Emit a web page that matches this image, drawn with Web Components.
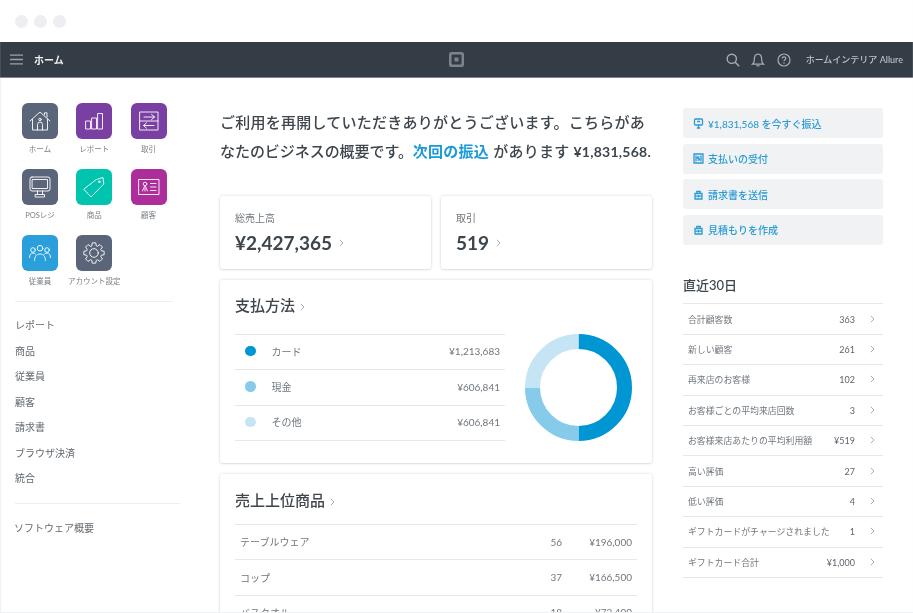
<!DOCTYPE html>
<html lang="ja">
<head>
<meta charset="utf-8">
<title>ホーム</title>
<style>
  html, body { margin: 0; height: 100%; overflow: hidden; background: #fff; }
  body { font-family: Lato, "Noto Sans CJK JP", sans-serif; color: #3d454d; }
</style>
</head>
<body>
<template id="top-nav">
  <style>
    :host { display: flex; align-items: center; height: 35px; background: #343c45; border-bottom: 1px solid #7d858e; color: #e6e8ea; position: relative; }
    .burger { margin-left: 10px; width: 13px; height: 11px; display: block; }
    .title { margin-left: 11px; font-size: 10px; font-weight: 700; color: #eceef0; }
    .logo { position: absolute; left: 449px; top: 10px; width: 15px; height: 15px; }
    .right { margin-left: auto; display: flex; align-items: center; }
    .right svg { display: block; }
    .shop { font-size: 9px; font-weight: 500; color: #bfc4c9; margin: 0 10px 0 15px; white-space: nowrap; }
    .i1 { margin-right: 11px; } .i2 { margin-right: 12px; }
  </style>
  <svg class="burger" viewBox="0 0 13 11" fill="none" stroke="#9aa1a9" stroke-width="1.3"><path d="M0 1.2h13M0 5.5h13M0 9.8h13"/></svg>
  <span class="title">ホーム</span>
  <svg class="logo" viewBox="0 0 15 15"><path fill="#7b848d" fill-rule="evenodd" d="M2.5 0h10A2.5 2.5 0 0 1 15 2.500v10a2.500 2.500 0 0 1-2.500 2.500h-10A2.500 2.500 0 0 1 0 12.500v-10A2.500 2.500 0 0 1 2.500 0zM3.500 2.500a1 1 0 0 0-1 1v8a1 1 0 0 0 1 1h8a1 1 0 0 0 1-1v-8a1 1 0 0 0-1-1z"/><rect x="5.500" y="5.500" width="4" height="4" rx=".5" fill="#7b848d"/></svg>
  <div class="right">
    <svg class="i1" width="14" height="14" viewBox="0 0 14 14" fill="none" stroke="#a6adb4" stroke-width="1.400"><circle cx="5.800" cy="5.800" r="4.600"/><path d="M9.200 9.200l4 4"/></svg>
    <svg class="i2" width="14" height="14" viewBox="0 0 14 14" fill="none" stroke="#a6adb4" stroke-width="1.200"><path d="M1.500 11.200c1.300-1 1.800-2 1.800-4.500C3.300 3.500 4.800 1.200 7 1.200s3.700 2.300 3.700 5.500c0 2.500.5 3.500 1.800 4.500z"/><path d="M5.500 12.800h3"/></svg>
    <svg width="14" height="14" viewBox="0 0 14 14" fill="none" stroke="#a6adb4" stroke-width="1.200"><circle cx="7" cy="7" r="6"/><path d="M5.200 5.600c0-1 .8-1.700 1.800-1.700s1.800.7 1.800 1.600c0 1.300-1.800 1.400-1.800 2.800"/><path d="M7 9.500v1.200"/></svg>
    <span class="shop">ホームインテリア Allure</span>
  </div>
</template>

<template id="app-tile">
  <style>
    :host { display: flex; flex-direction: column; align-items: center; width: 54px; height: 66px; }
    .box { width: 36px; height: 36px; border-radius: 6px; background: var(--tile, #5b6579); display: flex; align-items: center; justify-content: center; }
    .label { margin-top: 5px; font-size: 7.500px; line-height: 12px; color: #7b8187; white-space: nowrap; }
    ::slotted(svg) { display: block; width: 22px; height: 22px; fill: none; stroke: #fff; stroke-width: .9; stroke-linejoin: round; stroke-linecap: round; }
  </style>
  <div class="box"><slot name="icon"></slot></div>
  <div class="label"><slot></slot></div>
</template>

<template id="side-bar">
  <style>
    :host { display: block; width: 220px; flex: none; box-sizing: border-box; padding: 25px 0 0 13px; }
    .tiles { display: grid; grid-template-columns: repeat(3, 54.300px); grid-auto-rows: 66px; height: 198px; }
    hr { border: 0; border-top: 1px solid #edeef0; margin: 0; }
    .one { width: 158px; margin: 0 0 11px 2px; }
    .two { width: 165px; margin: 11px 0 12px 2px; }
    .links { margin-left: 2px; font-size: 10px; color: #62696f; }
    .links.extra { margin-left: 1px; }
    ::slotted(div) { height: 25.500px; line-height: 25.500px; }
  </style>
  <div class="tiles"><slot name="tiles"></slot></div>
  <hr class="one">
  <div class="links"><slot name="links"></slot></div>
  <hr class="two">
  <div class="links extra"><slot name="extra"></slot></div>
</template>

<template id="intro-text">
  <style>
    :host { display: block; font-size: 15px; line-height: 29px; font-weight: 500; color: #3d454d; height: 88px; letter-spacing: .25px; white-space: nowrap; }
    ::slotted(a) { color: #1a9ad6; font-weight: 700; }
    ::slotted(b) { font-weight: 700; font-size: 14px; }
    ::slotted(span) { letter-spacing: -.05px; }
  </style>
  <slot></slot>
</template>

<template id="summary-card">
  <style>
    :host { display: block; flex: 1; box-sizing: border-box; height: 73px; background: #fff; border-radius: 3px; box-shadow: 0 0 3px rgba(40,50,60,.2), 0 1px 2px rgba(40,50,60,.08); padding: 15px 15px 0; }
    .label { font-size: 10px; line-height: 14px; color: #70777e; }
    .value { margin-top: 4px; font-size: 19px; line-height: 27px; font-weight: 700; color: #3d454d; display: flex; align-items: center; white-space: nowrap; }
    svg { margin-left: 7px; }
  </style>
  <div class="label"><slot name="label"></slot></div>
  <div class="value"><slot></slot><svg width="5" height="8" viewBox="0 0 5 8" fill="none" stroke="#a9aeb3" stroke-width="1"><path d="M.8.8L4 4 .8 7.200"/></svg></div>
</template>

<template id="panel-card">
  <style>
    :host { display: block; box-sizing: border-box; background: #fff; border-radius: 3px; box-shadow: 0 0 3px rgba(40,50,60,.2), 0 1px 2px rgba(40,50,60,.08); padding: 15px 15px 0; margin-top: 11px; }
    h2 { margin: 0; font-size: 15px; line-height: 21px; font-weight: 500; color: #3d454d; display: flex; align-items: flex-start; height: var(--head, 39px); padding-top: var(--nudge, 0); box-sizing: border-box; }
    svg { margin: 8px 0 0 5px; }
  </style>
  <h2><slot name="title"></slot><svg width="5" height="8" viewBox="0 0 5 8" fill="none" stroke="#a9aeb3" stroke-width="1"><path d="M.8.800L4 4 .8 7.200"/></svg></h2>
  <slot></slot>
</template>

<template id="pay-row">
  <style>
    :host { display: flex; align-items: center; box-sizing: border-box; height: 35.400px; border-bottom: 1px solid #e6e8ea; font-size: 10px; color: #70777e; padding-bottom: 2px; }
    i { width: 10.500px; height: 10.500px; border-radius: 50%; background: var(--dot); margin: 0 16px 0 10px; flex: none; }
    .val { margin-left: auto; padding-right: 5px; }
  </style>
  <i></i><slot name="name"></slot><span class="val"><slot></slot></span>
</template>

<template id="item-row">
  <style>
    :host { display: flex; align-items: center; box-sizing: border-box; height: 35.400px; border-bottom: 1px solid #e6e8ea; font-size: 10px; color: #70777e; padding: 0 5px 1px; }
    .q { margin-left: auto; width: 20px; text-align: right; }
    .v { width: 70px; text-align: right; }
  </style>
  <slot name="name"></slot><span class="q"><slot name="qty"></slot></span><span class="v"><slot></slot></span>
</template>

<template id="action-button">
  <style>
    :host { display: flex; align-items: center; height: 30px; background: #f1f2f3; border-radius: 3px; margin-bottom: 5.600px; padding-left: 10px; font-size: 10px; font-weight: 500; color: #2a9bd4; white-space: nowrap; }
    ::slotted(svg) { width: 11px; height: 11px; margin-right: 4px; flex: none; fill: none; stroke: #2a9bd4; stroke-width: 1.300; }
  </style>
  <slot name="icon"></slot><slot></slot>
</template>

<template id="stat-row">
  <style>
    :host { display: flex; align-items: center; box-sizing: border-box; height: 30.400px; border-bottom: 1px solid #e6e8ea; font-size: 8.900px; color: #70777e; padding-left: 5px; white-space: nowrap; }
    .v { margin-left: auto; font-size: 9px; color: #5d646b; }
    svg { margin: 0 8px 1px 15px; flex: none; }
  </style>
  <slot name="name"></slot><span class="v"><slot></slot></span><svg width="5" height="8" viewBox="0 0 5 8" fill="none" stroke="#a9aeb3" stroke-width="1"><path d="M.8.800L4 4 .8 7.200"/></svg>
</template>

<template id="app-shell">
  <style>
    :host { display: block; height: 613px; overflow: hidden; position: relative; filter: blur(.35px); }
    :host::after { content: ""; position: absolute; inset: 0; box-shadow: inset 0 -1px 1px #f0f1f2; pointer-events: none; }
    .chrome { height: 42px; display: flex; align-items: center; gap: 6px; padding-left: 15px; box-sizing: border-box; }
    .chrome i { width: 13px; height: 13px; border-radius: 50%; background: #edeef2; }
    .body { display: flex; box-shadow: inset 1px 0 1px #f0f1f2; }
    .main { width: 432px; flex: none; padding-top: 30px; }
    .cards { display: flex; gap: 10px; }
    .side { width: 200px; flex: none; margin-left: 31px; padding-top: 30px; }
    h3 { margin: 0; padding-top: 24.500px; height: 54px; box-sizing: border-box; font-size: 13px; line-height: 20px; font-weight: 500; color: #3d454d; border-bottom: 1px solid #e6e8ea; }
  </style>
  <div class="chrome"><i></i><i></i><i></i></div>
  <slot name="nav"></slot>
  <div class="body">
    <slot name="sidebar"></slot>
    <div class="main">
      <slot name="intro"></slot>
      <div class="cards"><slot name="cards"></slot></div>
      <slot name="panels"></slot>
    </div>
    <div class="side">
      <slot name="actions"></slot>
      <h3>直近30日</h3>
      <slot name="stats"></slot>
    </div>
  </div>
</template>

<app-shell>
  <top-nav slot="nav"></top-nav>
  <side-bar slot="sidebar">
    <app-tile slot="tiles" style="--tile:#5b6579"><svg slot="icon" viewBox="0 0 22 22"><path d="M1 11L11 2l10 9M3.500 9.500V20h15V9.500M15.500 4.500V2.800h2.500v4.400M8.500 20v-5.500a2.500 2.500 0 0 1 5 0V20"/><circle cx="11" cy="9.500" r="1.200"/></svg>ホーム</app-tile>
    <app-tile slot="tiles" style="--tile:#7a3fa3"><svg slot="icon" viewBox="0 0 22 22"><path d="M3 11h4.500v8H3zM9 8h4.500v11H9zM15 3.500h4.500V19H15z"/></svg>レポート</app-tile>
    <app-tile slot="tiles" style="--tile:#7a3fa3"><svg slot="icon" viewBox="0 0 22 22"><path d="M2 2h18v18H2zM2 11h18M6 7h10.500M13.500 4.300L16.500 7l-3 2.700M16 15.500H5.500M8.500 12.800l-3 2.700 3 2.700"/></svg>取引</app-tile>
    <app-tile slot="tiles" style="--tile:#5b6579"><svg slot="icon" viewBox="0 0 22 22"><rect x="1" y="1" width="20" height="14" rx="2"/><rect x="3.500" y="3.500" width="15" height="9"/><path d="M8.500 15v3.500M13.500 15v3.500M6.500 18.500h9V21h-9z"/></svg>POSレジ</app-tile>
    <app-tile slot="tiles" style="--tile:#00c4ad"><svg slot="icon" viewBox="0 0 22 22"><path d="M13.500 3.500L20 1.500 20.800 8 8 21 1 13.500z"/><circle cx="16.300" cy="5.800" r=".8"/></svg>商品</app-tile>
    <app-tile slot="tiles" style="--tile:#ad2e9b"><svg slot="icon" viewBox="0 0 22 22"><path d="M1 3.500h20v15H1zM12.500 7.500h5.500M12.500 11h5.500M12.500 14.500h5.500"/><circle cx="7" cy="8" r="1.800"/><path d="M4.500 15l2-4.500h1l2 4.500M7 12v3"/></svg>顧客</app-tile>
    <app-tile slot="tiles" style="--tile:#2a9fdc"><svg slot="icon" viewBox="0 0 22 22"><circle cx="11" cy="6.200" r="2.800"/><circle cx="4" cy="8" r="2.300"/><circle cx="18" cy="8" r="2.300"/><path d="M5.500 18.500c0-4 2-6.500 5.500-6.500s5.500 2.500 5.500 6.500M.5 15.500c0-2.500 1.200-4.500 3.500-4.500 1 0 1.800.3 2.400.9M21.500 15.500c0-2.500-1.200-4.500-3.500-4.500-1 0-1.800.3-2.400.9"/></svg>従業員</app-tile>
    <app-tile slot="tiles" style="--tile:#5b6579"><svg slot="icon" viewBox="0 0 22 22"><circle cx="11" cy="11" r="4.300"/><path id="gear"/></svg>アカウント設定</app-tile>
    <div slot="links">レポート</div>
    <div slot="links">商品</div>
    <div slot="links">従業員</div>
    <div slot="links">顧客</div>
    <div slot="links">請求書</div>
    <div slot="links">ブラウザ決済</div>
    <div slot="links">統合</div>
    <div slot="extra">ソフトウェア概要</div>
  </side-bar>

  <intro-text slot="intro">ご利用を再開していただきありがとうございます。こちらがあ<br><span>なたのビジネスの概要です。</span><a>次回の振込</a> があります <b>¥1,831,568.</b></intro-text>

  <summary-card slot="cards"><span slot="label">総売上高</span>¥2,427,365</summary-card>
  <summary-card slot="cards"><span slot="label">取引</span>519</summary-card>

  <panel-card slot="panels" style="height:183px">
    <span slot="title">支払方法</span>
    <div style="display:flex;justify-content:space-between;align-items:flex-start">
      <div style="width:270px;border-top:1px solid #e6e8ea">
        <pay-row style="--dot:#0095d3"><span slot="name">カード</span>¥1,213,683</pay-row>
        <pay-row style="--dot:#86cbea"><span slot="name">現金</span>¥606,841</pay-row>
        <pay-row style="--dot:#c5e5f4"><span slot="name">その他</span>¥606,841</pay-row>
      </div>
      <svg width="107" height="107" viewBox="0 0 107 107" fill="none" stroke-width="15" style="margin-right:5px">
        <path d="M53.500 7.500a46 46 0 0 1 0 92" stroke="#0095d3"/>
        <path d="M53.500 99.500a46 46 0 0 1-46-46" stroke="#86cbea"/>
        <path d="M7.500 53.500a46 46 0 0 1 46-46" stroke="#c5e5f4"/>
      </svg>
    </div>
  </panel-card>
  <panel-card slot="panels" style="--head:35px;--nudge:1px">
    <span slot="title">売上上位商品</span>
    <div style="border-top:1px solid #e6e8ea">
      <item-row><span slot="name">テーブルウェア</span><span slot="qty">56</span>¥196,000</item-row>
      <item-row><span slot="name">コップ</span><span slot="qty">37</span>¥166,500</item-row>
      <item-row><span slot="name">バスタオル</span><span slot="qty">18</span>¥72,400</item-row>
    </div>
  </panel-card>

  <action-button slot="actions"><svg slot="icon" viewBox="0 0 11 11"><rect x="1.500" y="1" width="8" height="6" rx="1"/><path d="M5.500 7v3M3.800 10h3.400M4 3.500h3"/></svg>¥1,831,568 を今すぐ振込</action-button>
  <action-button slot="actions"><svg slot="icon" viewBox="0 0 11 11"><path d="M1 1h9v9H1zM3 2.500v6M8 2.500v6M6.500 3.800H5a.9.900 0 0 0 0 1.700h1a.9.900 0 0 1 0 1.700H4.500"/></svg>支払いの受付</action-button>
  <action-button slot="actions"><svg slot="icon" viewBox="0 0 11 11"><path d="M2 4.500h7V10H2zM3.800 4.500V2.500h3.400v2M2 7.200h7M5.500 6v2.400"/></svg>請求書を送信</action-button>
  <action-button slot="actions"><svg slot="icon" viewBox="0 0 11 11"><path d="M2 4.500h7V10H2zM3.800 4.500V2.500h3.400v2M2 7.200h7M5.500 6v2.400"/></svg>見積もりを作成</action-button>

  <stat-row slot="stats"><span slot="name">合計顧客数</span>363</stat-row>
  <stat-row slot="stats"><span slot="name">新しい顧客</span>261</stat-row>
  <stat-row slot="stats"><span slot="name">再来店のお客様</span>102</stat-row>
  <stat-row slot="stats"><span slot="name">お客様ごとの平均来店回数</span>3</stat-row>
  <stat-row slot="stats"><span slot="name">お客様来店あたりの平均利用額</span>¥519</stat-row>
  <stat-row slot="stats"><span slot="name">高い評価</span>27</stat-row>
  <stat-row slot="stats"><span slot="name">低い評価</span>4</stat-row>
  <stat-row slot="stats"><span slot="name">ギフトカードがチャージされました</span>1</stat-row>
  <stat-row slot="stats"><span slot="name">ギフトカード合計</span>¥1,000</stat-row>
</app-shell>

<script>
  // gear outline for the settings tile, eight teeth
  const gearPoints = [];
  for (let i = 0; i < 8; i++) {
    const a = i * Math.PI / 4;
    for (const [r, da] of [[7.6, -0.3], [10.3, -0.17], [10.3, 0.17], [7.6, 0.3]]) {
      gearPoints.push((11 + r * Math.sin(a + da)).toFixed(2) + ' ' + (11 - r * Math.cos(a + da)).toFixed(2));
    }
  }
  document.getElementById('gear').setAttribute('d', 'M' + gearPoints.join('L') + 'z');

  const templated = (name) => class extends HTMLElement {
    constructor() {
      super();
      const content = document.getElementById(name).content.cloneNode(true);
      this.attachShadow({ mode: 'open' }).appendChild(content);
    }
  };
  for (const name of ['app-shell', 'top-nav', 'side-bar', 'app-tile', 'intro-text', 'summary-card', 'panel-card', 'pay-row', 'item-row', 'action-button', 'stat-row']) {
    customElements.define(name, templated(name));
  }
</script>
</body>
</html>
